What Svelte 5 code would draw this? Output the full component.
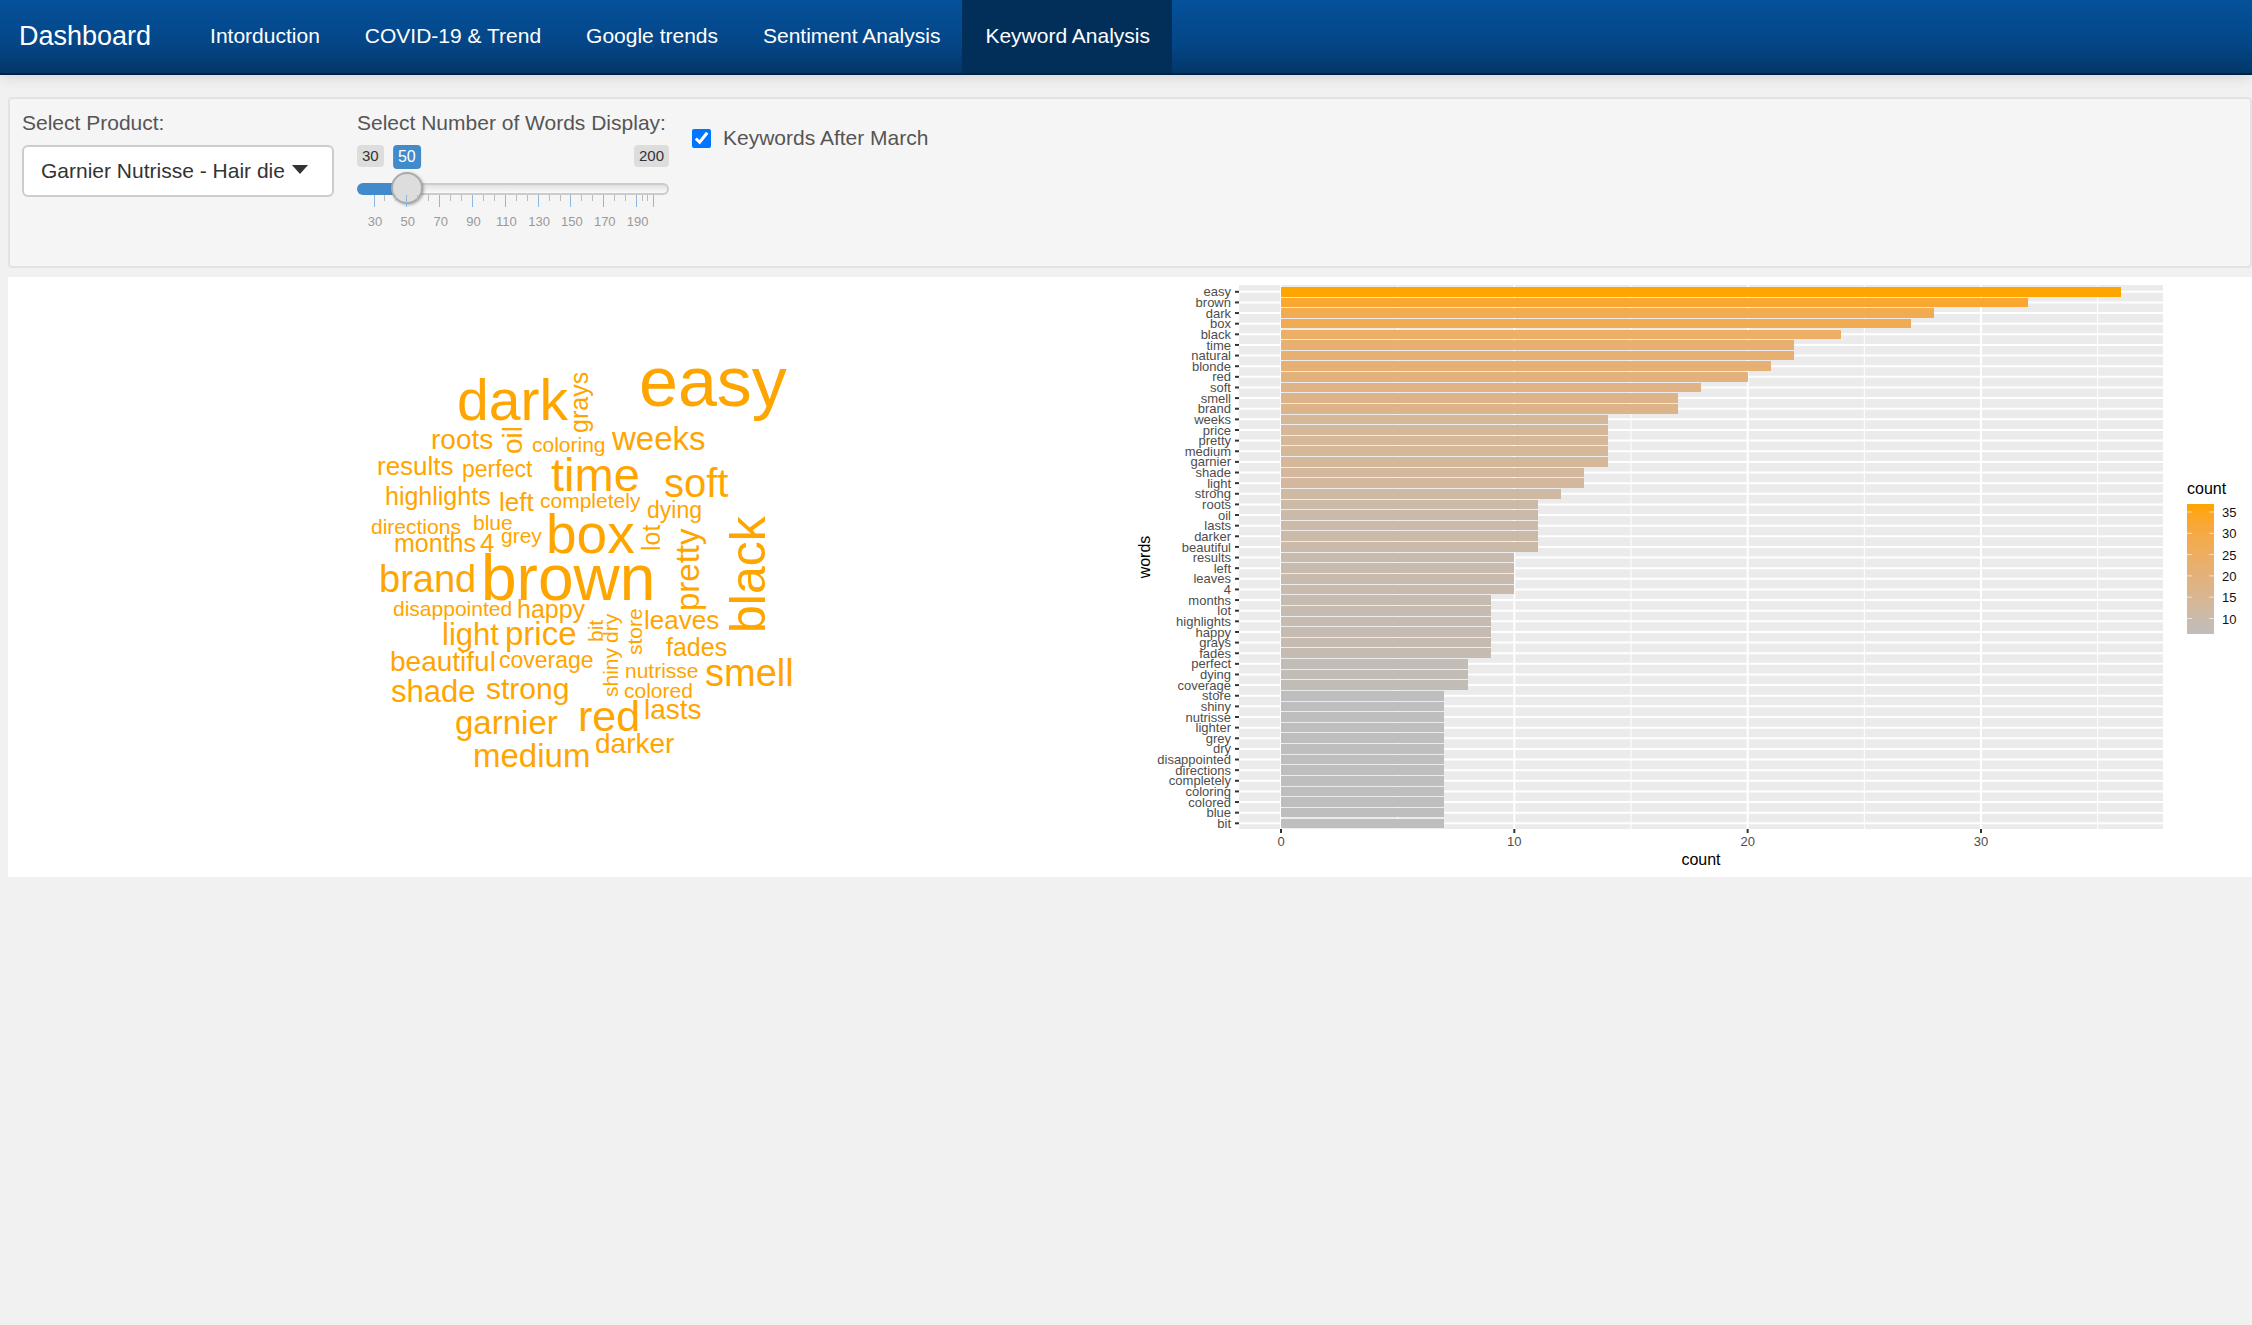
<script>
  const tabs = ['Intorduction', 'COVID-19 & Trend', 'Google trends', 'Sentiment Analysis', 'Keyword Analysis'];
  let active = $state('Keyword Analysis');
  let amount = $state(50);
  let afterMarch = $state(true);

  // Slider ruler: a labelled tick every 20 words, two small ticks between.
  const majors = [30, 50, 70, 90, 110, 130, 150, 170, 190, 200];
  const pos = (v) => 17 + ((v - 30) / 170) * 279;
  const minors = majors.slice(0, -1).flatMap((v, i) => {
    const step = (majors[i + 1] - v) / 3;
    return [v + step, v + 2 * step];
  });

  // Word cloud entries: word, count, x, baseline y, rotated
  const cloud = [
    ['dark', 28, 449, 143], ['easy', 36, 631, 129], ['roots', 11, 423, 172], ['coloring', 7, 524, 175],
    ['weeks', 14, 604, 173], ['results', 10, 369, 198], ['perfect', 8, 454, 200], ['time', 22, 543, 214],
    ['soft', 18, 656, 220], ['highlights', 9, 377, 228], ['left', 10, 491, 234], ['completely', 7, 532, 231],
    ['dying', 8, 639, 241], ['directions', 7, 363, 257], ['blue', 7, 465, 253], ['months', 9, 386, 275],
    ['4', 10, 472, 275], ['grey', 7, 493, 266], ['box', 27, 538, 276], ['brand', 17, 371, 315],
    ['brown', 32, 473, 323], ['disappointed', 7, 385, 339], ['happy', 9, 509, 341], ['light', 13, 434, 368],
    ['price', 14, 497, 368], ['beautiful', 11, 382, 394], ['coverage', 8, 491, 391], ['leaves', 10, 636, 352],
    ['fades', 9, 658, 379], ['nutrisse', 7, 617, 401], ['smell', 17, 697, 409], ['colored', 7, 616, 421],
    ['shade', 13, 383, 425], ['strong', 12, 478, 422], ['garnier', 14, 447, 457], ['red', 20, 570, 454],
    ['lasts', 11, 636, 442], ['medium', 14, 465, 490], ['darker', 11, 587, 476],
    ['oil', 11, 514, 177, true], ['grays', 9, 580, 156, true], ['lot', 9, 652, 274, true],
    ['pretty', 14, 691, 334, true], ['black', 24, 757, 356, true], ['bit', 7, 595, 365, true],
    ['dry', 7, 610, 366, true], ['store', 7, 634, 378, true], ['shiny', 7, 610, 420, true]
  ];
  const wordSize = (count) => Math.round(9.5 + 1.69 * count);

  const groups = [
    [36, 'easy'], [32, 'brown'], [28, 'dark'], [27, 'box'], [24, 'black'], [22, 'time natural'], [21, 'blonde'],
    [20, 'red'], [18, 'soft'], [17, 'smell brand'], [14, 'weeks price pretty medium garnier'], [13, 'shade light'],
    [12, 'strong'], [11, 'roots oil lasts darker beautiful'], [10, 'results left leaves 4'],
    [9, 'months lot highlights happy grays fades'], [8, 'perfect dying coverage'],
    [7, 'store shiny nutrisse lighter grey dry disappointed directions completely coloring colored blue bit']
  ];
  const bars = groups.flatMap(([count, words]) => words.split(' ').map((word) => ({ word, count })));
  const colors = {
    7: '#bebebe', 8: '#c2bcb7', 9: '#c5bbb1', 10: '#c9baae', 11: '#ccbaa8', 12: '#cebaa3', 13: '#d3b89e',
    14: '#d5b799', 17: '#ddb48a', 18: '#dfb385', 20: '#e3b17b', 21: '#e6b075', 22: '#e8b070', 24: '#edae65',
    27: '#f1ab53', 28: '#f3ab50', 32: '#faa732', 36: '#ffa500'
  };
  const px = (v) => 151 + (v * 70) / 3;
  const py = (i) => 14.8 + i * 10.63;
  const ly = (v) => 235 + (35 - v) * 4.26;
</script>

<nav class="navbar">
  <a class="brand" href="#home">Dashboard</a>
  {#each tabs as tab}
    <a class="tab" class:active={tab === active} href="#{tab}" onclick={() => (active = tab)}>{tab}</a>
  {/each}
</nav>

<main>
  <form class="well">
    <div class="field">
      <label for="product">Select Product:</label>
      <div class="picker">
        <select id="product">
          <option>Garnier Nutrisse - Hair die</option>
        </select>
        <svg class="caret" viewBox="0 0 16 9" width="16" height="9" aria-hidden="true"><path d="M0 0H16L8 9Z" /></svg>
      </div>
    </div>

    <div class="field">
      <label for="amount">Select Number of Words Display:</label>
      <div class="limits">
        <span class="limit">30</span>
        <output class="value" for="amount" style:left="{pos(amount)}px">{amount}</output>
        <span class="limit">200</span>
      </div>
      <input id="amount" type="range" min="30" max="200" bind:value={amount} style:--fill="{pos(amount)}px" />
      <svg class="ruler" viewBox="0 0 312 36" width="312" height="36" aria-hidden="true">
        {#each minors as v}
          <line class="minor" x1={pos(v)} x2={pos(v)} y1="0" y2="6" />
        {/each}
        {#each majors as v}
          <line class="major" x1={pos(v)} x2={pos(v)} y1="0" y2="12" />
          {#if v < 200}<text x={pos(v) + 1} y="31">{v}</text>{/if}
        {/each}
      </svg>
    </div>

    <label class="check">
      <input type="checkbox" bind:checked={afterMarch} />
      <span>Keywords After March</span>
    </label>
  </form>

  <section class="plots">
    <svg viewBox="0 0 1122 600" role="img" aria-label="Word cloud">
      <g class="cloud">
        {#each cloud as [word, count, x, y, turned]}
          <text font-size={wordSize(count)} transform="translate({x} {y}){turned ? ' rotate(-90)' : ''}">{word}</text>
        {/each}
      </g>
    </svg>

    <svg viewBox="0 0 1122 600" role="img" aria-label="Count of words">
      <defs>
        <linearGradient id="ramp" x1="0" y1="1" x2="0" y2="0">
          {#each Object.entries(colors) as [count, color]}
            <stop offset={(count - 7) / 29} stop-color={color} />
          {/each}
        </linearGradient>
      </defs>
      <rect class="panel" x="109" y="8" width="924" height="544" />
      {#each [5, 15, 25, 35] as v}
        <line class="grid thin" x1={px(v)} x2={px(v)} y1="8" y2="552" />
      {/each}
      {#each bars as bar, i}
        <line class="grid" x1="109" x2="1033" y1={py(i)} y2={py(i)} />
      {/each}
      {#each [0, 10, 20, 30] as v}
        <line class="grid" x1={px(v)} x2={px(v)} y1="8" y2="552" />
        <line class="mark" x1={px(v)} x2={px(v)} y1="552" y2="556" />
        <text class="tick middle" x={px(v)} y="569">{v}</text>
      {/each}
      {#each bars as bar, i}
        <rect class="bar" x="151" y={py(i) - 4.8} width={px(bar.count) - 151} height="9.6" fill={colors[bar.count]} />
        <line class="mark" x1="105" x2="109" y1={py(i)} y2={py(i)} />
        <text class="tick end" x="101" y={py(i) + 4.6}>{bar.word}</text>
      {/each}
      <text class="title middle" x="571" y="588">count</text>
      <text class="title middle" transform="translate(20 280) rotate(-90)">words</text>

      <text class="title" x="1057" y="217">count</text>
      <rect x="1057" y="227" width="27" height="130" fill="url(#ramp)" />
      {#each [35, 30, 25, 20, 15, 10] as v}
        <path class="notch" d="M1057 {ly(v)}h5M1079 {ly(v)}h5" />
        <text class="key" x="1092" y={ly(v) + 5}>{v}</text>
      {/each}
    </svg>
  </section>
</main>

<style>
  :global(body) {
    background: #f1f1f1;
    color: #555;
    font: 21px/30px "Liberation Sans", Arial, sans-serif;
  }

  .navbar {
    display: flex;
    height: 73px;
    border-bottom: 2px solid #022241;
    background: linear-gradient(#04519b, #044687 60%, #033769);
    box-shadow: 0 2px 14px rgba(0, 0, 0, 0.12);
  }
  .navbar a {
    color: #fff;
    line-height: 72px;
    text-decoration: none;
    white-space: nowrap;
  }
  .navbar .brand {
    margin-right: 36px;
    padding-left: 19px;
    font-size: 27px;
  }
  .navbar .tab {
    padding: 0 22px 0 23px;
  }
  .navbar .active {
    background: #022f5a;
  }

  main {
    padding: 22px 0 0 8px;
  }
  .well {
    display: flex;
    gap: 23px;
    margin-bottom: 9px;
    padding: 9px 12px 35px;
    border: 2px solid #e3e3e3;
    border-radius: 4px;
    background: #f5f5f5;
  }
  .field {
    width: 312px;
  }
  .field label {
    display: block;
    margin-bottom: 7px;
    white-space: nowrap;
  }

  .picker {
    position: relative;
  }
  select {
    width: 100%;
    height: 52px;
    padding: 0 46px 0 17px;
    border: 2px solid #ccc;
    border-radius: 6px;
    appearance: none;
    background: #fff;
    color: #333;
    font: inherit;
  }
  .caret {
    position: absolute;
    top: 20px;
    right: 26px;
    fill: #333;
    pointer-events: none;
  }

  .limits {
    position: relative;
    display: flex;
    justify-content: space-between;
    height: 38px;
    font-size: 15px;
    line-height: 22px;
  }
  .limit {
    height: 22px;
    padding: 0 5px;
    border-radius: 4px;
    background: #ddd;
    color: #333;
  }
  .value {
    position: absolute;
    top: 0;
    padding: 0 5px;
    border-radius: 4px;
    background: #428bca;
    color: #fff;
    font-size: 16px;
    line-height: 24px;
    transform: translateX(-50%);
  }
  input[type="range"] {
    display: block;
    width: 100%;
    height: 12px;
    margin: 0;
    border: 2px solid transparent;
    border-radius: 6px;
    box-sizing: border-box;
    appearance: none;
    background:
      linear-gradient(90deg, #428bca var(--fill), transparent var(--fill)) border-box,
      linear-gradient(#e2e2e2, #fafafa) padding-box,
      linear-gradient(#ccc, #ccc) border-box;
  }
  input[type="range"]::-webkit-slider-thumb {
    width: 32px;
    height: 32px;
    margin-top: -3px;
    border: 2px solid #aaa;
    border-radius: 50%;
    box-sizing: border-box;
    appearance: none;
    background: #ddd;
    box-shadow: 1px 1px 3px rgba(0, 0, 0, 0.3);
  }
  .ruler {
    display: block;
  }
  .ruler text {
    fill: #999;
    font-size: 13px;
    text-anchor: middle;
  }
  .ruler line {
    shape-rendering: crispEdges;
    stroke-width: 1px;
  }
  .ruler .minor {
    stroke: #bbb;
  }
  .ruler .major {
    stroke: #8fb8dc;
  }

  .check {
    display: flex;
    gap: 12px;
    align-self: flex-start;
    align-items: center;
    padding-top: 15px;
  }
  .check input {
    width: 19px;
    height: 19px;
    margin: 0;
    accent-color: #0075ff;
  }

  .plots {
    display: flex;
    background: #fff;
  }
  .plots svg {
    flex: 1;
    min-width: 0;
    font-family: "Liberation Sans", Arial, sans-serif;
  }
  .cloud {
    fill: orange;
  }
  .panel {
    fill: #ebebeb;
  }
  .grid {
    stroke: #fff;
    stroke-width: 2px;
  }
  .thin {
    stroke-width: 1px;
  }
  .bar {
    shape-rendering: crispEdges;
  }
  .mark {
    stroke: #333;
    stroke-width: 2px;
  }
  .tick {
    fill: #4d4d4d;
    font-size: 13px;
  }
  .key {
    fill: #111;
    font-size: 13px;
  }
  .title {
    fill: #000;
    font-size: 16px;
  }
  .middle {
    text-anchor: middle;
  }
  .end {
    text-anchor: end;
  }
  .notch {
    fill: none;
    stroke: #fff;
    stroke-opacity: 0.6;
  }
</style>
